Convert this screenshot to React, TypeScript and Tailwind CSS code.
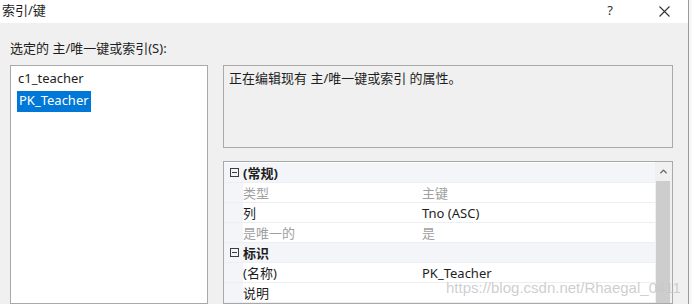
import { ChevronUp } from 'lucide-react'

const ui = 'font-["Segoe_UI","Noto_Sans","Noto_Sans_CJK_SC",sans-serif]'

type Row =
  | { kind: 'cat'; label: string }
  | { kind: 'prop'; label: string; value: string; readOnly?: boolean }

const rows: Row[] = [
  { kind: 'cat', label: '(常规)' },
  { kind: 'prop', label: '类型', value: '主键', readOnly: true },
  { kind: 'prop', label: '列', value: 'Tno (ASC)' },
  { kind: 'prop', label: '是唯一的', value: '是', readOnly: true },
  { kind: 'cat', label: '标识' },
  { kind: 'prop', label: '(名称)', value: 'PK_Teacher' },
  { kind: 'prop', label: '说明', value: '' }
]

// 折叠框：小方框里一条横线
function CollapseBox() {
  return (
    <span className="flex h-[9px] w-[9px] items-center justify-center border border-[#3c3c3c]">
      <span className="h-px w-[5px] bg-[#3c3c3c]" />
    </span>
  )
}

export default function App() {
  return (
    <div className={`relative flex h-[304px] w-[692px] overflow-hidden bg-[#f7f7f7] text-[13px] text-[#1e1e1e] ${ui}`}>
      <div className="flex w-[689px] shrink-0 flex-col border-r border-[#9a9a9a] bg-[#f0f0f0]">
        {/* 标题栏 */}
        <div className="flex h-[23px] shrink-0 items-center bg-white pb-[3px] pl-[2px]">
          <span className="flex-1 leading-none">索引/键</span>
          <span className="mr-[46px] text-[13px] leading-none text-[#333]">?</span>
          <svg className="mr-[18px] mt-[2px]" width="11" height="11" viewBox="0 0 11 11">
            <path d="M0.5 0.5 L10.5 10.5 M10.5 0.5 L0.5 10.5" stroke="#333" strokeWidth="1.1" />
          </svg>
        </div>

        <div className="flex flex-1 flex-col pl-[10px] pr-[15px] pt-[19px]">
          <p className="leading-none">选定的 主/唯一键或索引(S):</p>

          <div className="mt-[10px] flex flex-1 gap-[15px]">
            {/* 左侧索引列表 */}
            <div className="w-[198px] shrink-0 border border-[#a9a9a9] bg-white px-[6px] pt-[2px]">
              <div className="flex h-[22px] items-center pl-[1px]">c1_teacher</div>
              <div className="flex h-[22px] items-center">
                <span className="flex h-[21px] items-center bg-[#0078d7] px-[2px] text-white">PK_Teacher</span>
              </div>
            </div>

            <div className="flex flex-1 flex-col">
              {/* 描述框 */}
              <div className="h-[83px] shrink-0 border border-[#a9a9a9] px-[5px] pt-[3px] leading-[18px]">
                正在编辑现有 主/唯一键或索引 的属性。
              </div>

              {/* 属性表 */}
              <div className="mt-[13px] flex flex-1 border border-[#a9a9a9] bg-white">
                <div className="flex-1 pt-px leading-[14px]">
                  {rows.map((row, i) =>
                    row.kind === 'cat' ? (
                      <div key={i} className="flex h-[20px] items-center border-b border-[#eceff4] bg-[#f3f5f9] font-bold">
                        <span className="flex w-[19px] justify-center pl-[1px]">
                          <CollapseBox />
                        </span>
                        <span>{row.label}</span>
                      </div>
                    ) : (
                      <div key={i} className="flex h-[20px] items-center border-b border-[#eceff2]">
                        <span className="h-full w-[19px] bg-[#f3f5f9]" />
                        <span className={`w-[179px] ${row.readOnly ? 'text-[#a0a0a0]' : ''}`}>{row.label}</span>
                        <span className={row.readOnly ? 'text-[#a0a0a0]' : ''}>{row.value}</span>
                      </div>
                    )
                  )}
                </div>

                {/* 滚动条 */}
                <div className="flex w-[17px] shrink-0 flex-col bg-[#f0f0f0]">
                  <div className="flex h-[19px] items-center justify-center">
                    <ChevronUp size={11} strokeWidth={3} color="#606060" />
                  </div>
                  <div className="ml-px mr-[2px] flex-1 bg-[#cdcdcd]" />
                </div>
              </div>
            </div>
          </div>
        </div>
      </div>

      {/* 水印 */}
      <span className="pointer-events-none absolute left-[446px] top-[280px] font-['Liberation_Sans',sans-serif] text-[15px] leading-none text-[#c9c9c9]/90">
        https://blog.csdn.net/Rhaegal_0411
      </span>
    </div>
  )
}
